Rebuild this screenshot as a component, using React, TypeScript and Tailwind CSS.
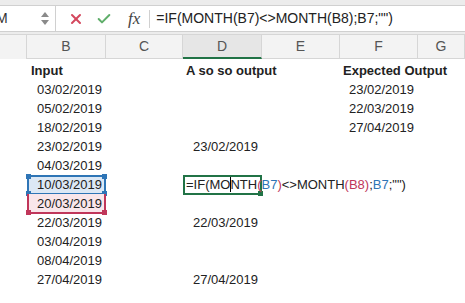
import { X, Check } from 'lucide-react';

const cols = 'grid grid-cols-[27px_79px_77px_79px_78px_78px_1fr]';

type Row = { b?: string; d?: string; f?: string; mark?: 'blue' | 'red'; formula?: boolean };

const rows: Row[] = [
  { b: '03/02/2019', f: '23/02/2019' },
  { b: '05/02/2019', f: '22/03/2019' },
  { b: '18/02/2019', f: '27/04/2019' },
  { b: '23/02/2019', d: '23/02/2019' },
  { b: '04/03/2019' },
  { b: '10/03/2019', mark: 'blue', formula: true },
  { b: '20/03/2019', mark: 'red' },
  { b: '22/03/2019', d: '22/03/2019' },
  { b: '03/04/2019' },
  { b: '08/04/2019' },
  { b: '27/04/2019', d: '27/04/2019' },
];

function Handles({ color }: { color: string }) {
  const sq = `absolute w-[5px] h-[5px] ${color}`;
  return (
    <>
      <span className={`${sq} -left-[3px] -top-[3px]`} />
      <span className={`${sq} -right-[3px] -top-[3px]`} />
      <span className={`${sq} -left-[3px] -bottom-[3px]`} />
      <span className={`${sq} -right-[3px] -bottom-[3px]`} />
    </>
  );
}

// formula being edited in D7, refs coloured like Excel does
function FormulaText() {
  return (
    <>
      =IF(MO<span className="inline-block w-px h-[15px] bg-black align-middle -mx-[0.5px]" />NTH
      <span className="text-[#c0365a]">(</span>
      <span className="text-[#2e75b6]">B7</span>
      <span className="text-[#c0365a]">)</span>&lt;&gt;MONTH
      <span className="text-[#c0365a]">(B8)</span>;<span className="text-[#2e75b6]">B7</span>;"")
    </>
  );
}

export default function App() {
  return (
    <div className="w-[465px] h-[303px] overflow-hidden bg-white text-[#222] font-['Liberation_Sans',Arial,sans-serif]">
      {/* formula bar */}
      <div className="h-[34px] bg-[#ececec] pt-[5px] pb-[2px]">
        <div className="h-[27px] flex items-center bg-white border-y border-[#d0d0d0]">
          <div className="w-[56px] h-full flex items-center justify-between border-r border-[#d0d0d0] pr-[6px]">
            <span className="text-[14px] -ml-[4px] text-[#333]">M</span>
            <div className="flex flex-col gap-[3px] items-center">
              <span className="w-0 h-0 border-x-[4px] border-x-transparent border-b-[5px] border-b-[#8a8a8a]" />
              <span className="w-0 h-0 border-x-[4px] border-x-transparent border-t-[5px] border-t-[#8a8a8a]" />
            </div>
          </div>
          <div className="flex items-center ml-[12px] gap-[12px]">
            <X className="w-[16px] h-[16px] text-[#d4485e]" strokeWidth={3} />
            <Check className="w-[16px] h-[16px] text-[#5fae6a]" strokeWidth={3} />
          </div>
          <span className="ml-[16px] text-[17px] italic text-[#444] font-['Liberation_Serif',serif]">fx</span>
          <span className="ml-[9px] w-px h-[18px] bg-[#d0d0d0]" />
          <div className="ml-[6px] text-[14px] text-[#222] whitespace-nowrap">=IF(MONTH(B7)&lt;&gt;MONTH(B8);B7;"")</div>
        </div>
      </div>

      {/* column headers */}
      <div className={`${cols} h-[25px] bg-[#f3f3f3] border-t border-[#d6d6d6] text-[14px] text-[#555]`}>
        <div className="border-r border-[#d6d6d6]" />
        {['B', 'C', 'D', 'E', 'F', 'G'].map((c) => (
          <div
            key={c}
            className={`flex items-center justify-center border-r border-[#d6d6d6] ${
              c === 'D' ? 'bg-[#e6e6e6] border-b-2 border-b-[#217346]' : 'border-b border-b-[#d6d6d6]'
            }`}
          >
            {c}
          </div>
        ))}
      </div>

      {/* sheet body */}
      <div className="text-[13px] pt-[2px]">
        <div className={`${cols} h-[19px] items-center font-bold`}>
          <div />
          <div className="pl-[4px]">Input</div>
          <div />
          <div className="pl-[3px] whitespace-nowrap">A so so output</div>
          <div />
          <div className="pl-[3px] whitespace-nowrap">Expected Output</div>
          <div />
        </div>
        {rows.map((r, i) => (
          <div key={i} className={`${cols} h-[19px]`}>
            <div />
            <div className="relative flex items-center justify-end pr-[4px]">
              {r.mark === 'blue' && (
                <div className="absolute inset-0 bg-[#dce8f5] border-2 border-[#2e75b6]">
                  <Handles color="bg-[#2e75b6]" />
                </div>
              )}
              {r.mark === 'red' && (
                <div className="absolute inset-0 bg-[#f9e6ea] border-2 border-t-0 border-[#c0365a]">
                  <span className="absolute w-[5px] h-[5px] bg-[#c0365a] -left-[3px] -bottom-[3px]" />
                  <span className="absolute w-[5px] h-[5px] bg-[#c0365a] -right-[3px] -bottom-[3px]" />
                </div>
              )}
              <span className="relative">{r.b}</span>
            </div>
            <div />
            <div className="relative flex items-center justify-end pr-[4px]">
              {r.formula ? (
                <>
                  <div className="absolute inset-0 border-2 border-[#217346] bg-white">
                    <span className="absolute w-[5px] h-[5px] bg-[#217346] -right-[3px] -bottom-[3px]" />
                  </div>
                  <span className="absolute left-[3px] top-0 h-full flex items-center whitespace-nowrap">
                    <FormulaText />
                  </span>
                </>
              ) : (
                r.d
              )}
            </div>
            <div />
            <div className="flex items-center justify-end pr-[4px]">{r.f}</div>
            <div />
          </div>
        ))}
      </div>
    </div>
  );
}
